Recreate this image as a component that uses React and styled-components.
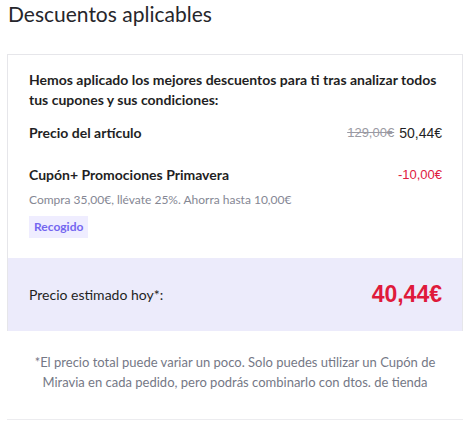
import styled, { createGlobalStyle } from 'styled-components';

const GlobalStyle = createGlobalStyle`
  body {
    margin: 0;
    background: #fff;
    font-family: Lato, "Open Sans", sans-serif;
    color: #1f1f24;
  }
`;

const Page = styled.div`
  width: 456px;
  padding: 0 12px 0 7px;
`;

const Title = styled.h2`
  margin: 0;
  padding: 2px 0 0 1px;
  font-size: 21px;
  font-weight: 400;
  line-height: 24px;
  color: #26262b;
`;

const Card = styled.section`
  margin-top: 28px;
  border: 1px solid #e6e6ea;
  border-bottom: none;
`;

const Body = styled.div`
  padding: 15px 20px 20px 21px;
  display: flex;
  flex-direction: column;
`;

const Intro = styled.p`
  margin: 0;
  font-size: 14px;
  font-weight: 700;
  line-height: 19.5px;
`;

const Row = styled.div`
  display: flex;
  justify-content: space-between;
  align-items: center;
  margin-top: ${(p) => p.$top}px;
  font-size: 14px;
  font-weight: 700;
  line-height: 20px;
`;

const Prices = styled.div`
  display: flex;
  align-items: center;
  gap: 5px;
  font-family: "Liberation Sans", Arial, sans-serif;
  font-weight: 400;
`;

const Old = styled.span`
  color: #9a9aa3;
  text-decoration: line-through;
  font-size: 13px;
`;

const Now = styled.span`
  color: #1f1f24;
  font-size: 14px;
`;

const Discount = styled.span`
  font-family: "Liberation Sans", Arial, sans-serif;
  font-weight: 400;
  font-size: 13px;
  color: #e0203f;
`;

const Note = styled.div`
  margin-top: 6px;
  font-size: 12px;
  line-height: 18px;
  color: #858794;
`;

const Badge = styled.span`
  align-self: flex-start;
  margin-top: 7px;
  padding: 0 5px;
  height: 22px;
  line-height: 22px;
  background: #efedff;
  color: #7466f0;
  font-size: 12px;
  font-weight: 700;
`;

const Total = styled.div`
  display: flex;
  justify-content: space-between;
  align-items: center;
  height: 73px;
  padding: 0 20px 0 21px;
  background: #ecebfb;
  font-size: 14px;
`;

const TotalPrice = styled.span`
  font-family: "Liberation Sans", Arial, sans-serif;
  font-weight: 700;
  font-size: 23px;
  color: #df1a3b;
`;

const Footnote = styled.p`
  margin: 0;
  padding: 21px 8px 0;
  text-align: center;
  font-size: 13px;
  line-height: 20px;
  color: #757886;
  height: 67px;
  border-bottom: 1px solid #ececef;
`;

export default function App() {
  return (
    <Page>
      <GlobalStyle />
      <Title>Descuentos aplicables</Title>
      <Card>
        <Body>
          <Intro>
            Hemos aplicado los mejores descuentos para ti tras analizar todos tus cupones y sus condiciones:
          </Intro>
          <Row $top={14}>
            <span>Precio del artículo</span>
            <Prices>
              <Old>129,00€</Old>
              <Now>50,44€</Now>
            </Prices>
          </Row>
          <Row $top={22}>
            <span>Cupón+ Promociones Primavera</span>
            <Discount>-10,00€</Discount>
          </Row>
          <Note>Compra 35,00€, llévate 25%. Ahorra hasta 10,00€</Note>
          <Badge>Recogido</Badge>
        </Body>
        <Total>
          <span>Precio estimado hoy*:</span>
          <TotalPrice>40,44€</TotalPrice>
        </Total>
      </Card>
      <Footnote>
        *El precio total puede variar un poco. Solo puedes utilizar un Cupón de Miravia en cada pedido, pero podrás combinarlo con dtos. de tienda
      </Footnote>
    </Page>
  );
}
